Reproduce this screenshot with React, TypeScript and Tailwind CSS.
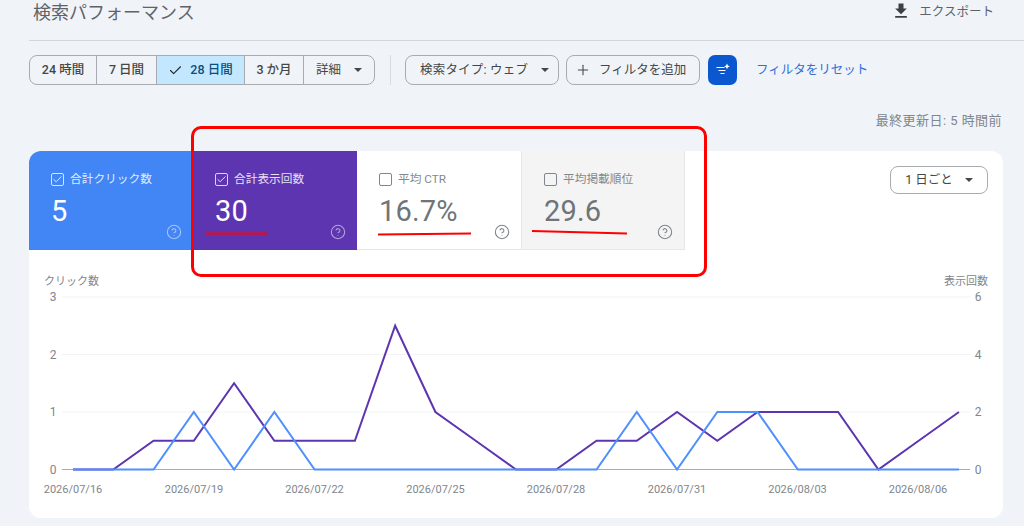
import { Check, CircleHelp, Plus } from 'lucide-react';

const FONT = "font-['Roboto','Noto_Sans_CJK_JP',sans-serif]";

const xAt = (i: number) => 73 + i * 40.27;
const yAt = (v: number) => 469.5 - v * 57.5;
const toPoints = (values: number[]) => values.map((v, i) => `${xAt(i)},${yAt(v)}`).join(' ');

const clicks = [0, 0, 0, 1, 0, 1, 0, 0, 0, 0, 0, 0, 0, 0, 1, 0, 1, 1, 0, 0, 0, 0, 0];
const impressions = [0, 0, 0.5, 0.5, 1.5, 0.5, 0.5, 0.5, 2.5, 1, 0.5, 0, 0, 0.5, 0.5, 1, 0.5, 1, 1, 1, 0, 0.5, 1];

const dates = [
  ['2026/07/16', 73],
  ['2026/07/19', 194],
  ['2026/07/22', 314.5],
  ['2026/07/25', 435.5],
  ['2026/07/28', 556],
  ['2026/07/31', 677],
  ['2026/08/03', 797.5],
  ['2026/08/06', 918],
] as const;

function Caret() {
  return (
    <svg width="8" height="4" viewBox="0 0 8 4" className="fill-current">
      <path d="M0 0h8L4 4z" />
    </svg>
  );
}

function Tile({
  label,
  value,
  checked,
  className,
  boxClass,
  helpClass,
}: {
  label: string;
  value: string;
  checked: boolean;
  className: string;
  boxClass: string;
  helpClass: string;
}) {
  return (
    <div className={`w-[164px] h-[99px] pl-[22px] pt-[22px] pr-[11px] flex flex-col ${className}`}>
      <div className="flex items-center gap-[6px] h-[13px] text-[11.7px] leading-none">
        <span className={`w-[13px] h-[13px] rounded-[2px] border-[1.5px] flex items-center justify-center ${boxClass}`}>
          {checked && <Check size={11} strokeWidth={2} />}
        </span>
        <span className="opacity-85">{label}</span>
      </div>
      <div className="mt-[8px] text-[29px] leading-[34px] tracking-[0.2px]">{value}</div>
      <div className="mt-[-4px] flex justify-end">
        <CircleHelp size={16} strokeWidth={1.6} className={helpClass} />
      </div>
    </div>
  );
}

export default function App() {
  return (
    <div className={`relative w-[1024px] h-[526px] overflow-hidden bg-[#f0f4f9] ${FONT}`}>
      {/* Title row */}
      <div className="ml-[29px] h-[41px] pl-[4px] pt-[1px] pr-[30px] border-b border-[#d3d6d9] flex justify-between">
        <h1 className="text-[18px] leading-[24px] text-[#5f6368]">検索パフォーマンス</h1>
        <div className="flex items-start gap-[8px] text-[12.5px] leading-[22px] text-[#5f6368]">
          <svg width="20" height="20" viewBox="0 0 24 24" className="fill-[#3c4043]">
            <path d="M5 20h14v-2H5v2zM19 9h-4V3H9v6H5l7 7 7-7z" />
          </svg>
          <span>エクスポート</span>
        </div>
      </div>

      {/* Filter bar */}
      <div className="mt-[14px] ml-[29px] h-[30px] flex items-center text-[12.5px] text-[#444746]">
        <div className="flex h-[30px] rounded-[8px] border border-[#a8abaf] overflow-hidden font-medium divide-x divide-[#a8abaf]">
          <div className="w-[67px] flex items-center justify-center">24 時間</div>
          <div className="w-[60px] flex items-center justify-center">7 日間</div>
          <div className="w-[88px] flex items-center justify-center gap-[7px] bg-[#c2e7ff] text-[#0b4f7d]">
            <Check size={15} strokeWidth={1.8} className="text-[#1f2a37]" />
            28 日間
          </div>
          <div className="w-[59px] flex items-center justify-center">3 か月</div>
          <div className="w-[70px] flex items-center justify-center gap-[13px] font-normal">
            詳細
            <Caret />
          </div>
        </div>
        <div className="ml-[15px] w-px h-[30px] bg-[#d9dcdf]" />
        <div className="ml-[14px] w-[154px] h-[30px] rounded-[8px] border border-[#a8abaf] flex items-center pl-[14px] gap-[13px] tracking-[0.2px]">
          検索タイプ: ウェブ
          <Caret />
        </div>
        <div className="ml-[7px] w-[134px] h-[30px] rounded-[8px] border border-[#a8abaf] flex items-center pl-[8px] gap-[8px]">
          <Plus size={16} strokeWidth={1.6} />
          フィルタを追加
        </div>
        <div className="ml-[8px] w-[29px] h-[30px] rounded-[7px] bg-[#0b57d0] flex items-center justify-center">
          <svg width="16" height="16" viewBox="0 0 16 16" fill="none" stroke="#fff" strokeWidth="1.2">
            <path d="M1.5 5.5h8M3.5 8.5h7M5.5 11.5h4" />
            <path d="M12 1.5l.9 2 2 .9-2 .9-.9 2-.9-2-2-.9 2-.9z" fill="#fff" stroke="none" />
          </svg>
        </div>
        <a className="ml-[19px] text-[#2f6fd6]">フィルタをリセット</a>
      </div>

      <div className="mt-[27px] mr-[22px] h-[39px] text-right text-[13px] leading-[18px] text-[#80868b] tracking-[0.45px]">
        最終更新日: 5 時間前
      </div>

      {/* Performance card */}
      <div className="ml-[29px] w-[974px] h-[367px] rounded-[12px] bg-white overflow-hidden">
        <div className="h-[99px] flex">
          <Tile
            label="合計クリック数"
            value="5"
            checked
            className="bg-[#4285f4] text-white"
            boxClass="border-[#d5e3fc] text-[#eaf1fe]"
            helpClass="text-[#a5c3f9]"
          />
          <Tile
            label="合計表示回数"
            value="30"
            checked
            className="bg-[#5e35b1] text-white"
            boxClass="border-[#dcd3ee] text-[#efeaf7]"
            helpClass="text-[#b4a0db]"
          />
          <Tile
            label="平均 CTR"
            value="16.7%"
            checked={false}
            className="bg-white text-[#6f7478] border-b border-[#e6e7e9]"
            boxClass="border-[#80868b]"
            helpClass="text-[#80868b]"
          />
          <Tile
            label="平均掲載順位"
            value="29.6"
            checked={false}
            className="bg-[#f4f4f5] text-[#6f7478] border-l border-r border-b border-[#e6e7e9]"
            boxClass="border-[#80868b]"
            helpClass="text-[#80868b]"
          />
          <div className="flex-1 flex justify-end pt-[15px] pr-[15px]">
            <div className="w-[98px] h-[28px] rounded-[8px] border border-[#a8abaf] flex items-center justify-center gap-[12px] text-[12.5px] text-[#444746]">
              1 日ごと
              <Caret />
            </div>
          </div>
        </div>

        {/* Chart */}
        <svg width="974" height="268" viewBox="29 250 974 268" className="block fill-[#80868b] text-[11px]">
          <text x="44" y="285">クリック数</text>
          <text x="988" y="285" textAnchor="end">表示回数</text>
          {[3, 2, 1].map((v) => (
            <line key={v} x1="62" x2="970" y1={yAt(v)} y2={yAt(v)} stroke="#f1f3f4" strokeWidth="1" />
          ))}
          <line x1="62" x2="970" y1="469.5" y2="469.5" stroke="#a8abaf" strokeWidth="1" />
          {[0, 1, 2, 3].map((v) => (
            <text key={v} x="53" y={yAt(v) + 4} textAnchor="middle" className="text-[12px]">{v}</text>
          ))}
          {[0, 1, 2, 3].map((v) => (
            <text key={v} x="978" y={yAt(v) + 4} textAnchor="middle" className="text-[12px]">{v * 2}</text>
          ))}
          {dates.map(([label, x]) => (
            <text key={label} x={x} y="493" textAnchor="middle">{label}</text>
          ))}
          <polyline points={toPoints(impressions)} fill="none" stroke="#5e35b1" strokeWidth="2" />
          <polyline points={toPoints(clicks)} fill="none" stroke="#4d90fe" strokeWidth="2" />
        </svg>
      </div>

      {/* Red annotations on top of the screenshot */}
      <div className="absolute left-[191px] top-[126px] w-[516px] h-[151px] rounded-[10px] border-[3px] border-[#ff0000]" />
      <svg width="1024" height="526" className="absolute left-0 top-0 pointer-events-none" fill="none" stroke="#ff0000" strokeWidth="2">
        <path d="M206 233.5H268" />
        <path d="M378 234.5Q430 234 471 233.5" />
        <path d="M532 231Q580 232 627 233.5" />
      </svg>
    </div>
  );
}
